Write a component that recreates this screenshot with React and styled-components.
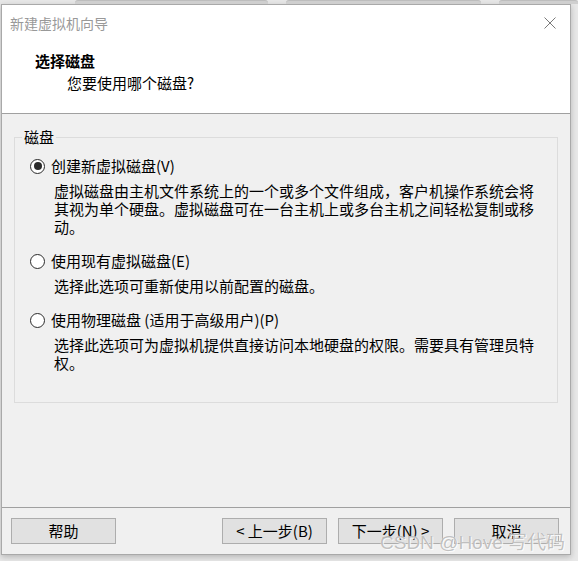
import React from 'react';
import styled, {createGlobalStyle} from 'styled-components';

const Global = createGlobalStyle`
    html, body {
        margin: 0;
        padding: 0;
        background: #e8e8e8;
    }
    body {
        font-family: "Noto Sans CJK SC", "Liberation Sans", sans-serif;
        color: #000;
    }
`;

const Desktop = styled.div`
    position: relative;
    box-sizing: border-box;
    width: 578px;
    height: 561px;
    overflow: hidden;
    padding-left: 1px;
`;

const TabStrip = styled.div`
    display: flex;
    height: 4px;
    padding-left: 74px;
    gap: 18px;
`;

const Tab = styled.div`
    width: ${p => p.w}px;
    height: 4px;
    background: #cfcfcf;
    border-top: 1px solid #bdbdbd;
    box-sizing: border-box;
    border-radius: 3px 3px 0 0;
`;

const Window = styled.div`
    box-sizing: border-box;
    width: 570px;
    height: 551px;
    border: 1px solid #a9a9a9;
    background: #f0f0f0;
    box-shadow: 0 2px 6px rgba(0, 0, 0, 0.22);
    display: flex;
    flex-direction: column;
`;

const TitleBar = styled.div`
    flex: none;
    height: 36px;
    display: flex;
    align-items: center;
    justify-content: space-between;
    padding: 0 14px 0 8px;
    background: #fff;
    font-size: 14px;
    color: #999;
`;

const Header = styled.div`
    flex: none;
    height: 73px;
    box-sizing: border-box;
    background: #fff;
    border-bottom: 1px solid #a0a0a0;
    padding: 10px 0 0 33px;
`;

const Heading = styled.div`
    font-size: 15px;
    line-height: 20px;
    font-weight: bold;
`;

const SubHeading = styled.div`
    font-size: 15px;
    line-height: 20px;
    margin: 2px 0 0 32px;
`;

const Body = styled.div`
    flex: 1;
    box-sizing: border-box;
    border-bottom: 1px solid #a0a0a0;
    padding: 23px 0 0 12px;
`;

const Group = styled.div`
    position: relative;
    box-sizing: border-box;
    width: 544px;
    height: 266px;
    border: 1px solid #dcdcdc;
    padding: 19px 0 0 15px;
    display: flex;
    flex-direction: column;
    gap: 16px;
`;

const Legend = styled.div`
    position: absolute;
    top: -10px;
    left: 7px;
    padding: 0 2px;
    background: #f0f0f0;
    font-size: 15px;
    line-height: 18px;
`;

const Option = styled.div`
    display: flex;
    flex-direction: column;
    gap: 7px;
`;

const OptionRow = styled.label`
    display: flex;
    align-items: center;
    gap: 6px;
    font-size: 15px;
    line-height: 18px;
`;

const Radio = styled.span`
    position: relative;
    box-sizing: border-box;
    width: 15px;
    height: 15px;
    border-radius: 50%;
    border: 1px solid #2b2b2b;
    background: #fff;

    &::after {
        content: '';
        display: ${p => (p.checked ? 'block' : 'none')};
        position: absolute;
        top: 2.5px;
        left: 2.5px;
        width: 8px;
        height: 8px;
        border-radius: 50%;
        background: #2b2b2b;
    }
`;

const Description = styled.div`
    width: 485px;
    margin-left: 24px;
    font-size: 15px;
    line-height: 18px;
`;

const Footer = styled.div`
    flex: none;
    box-sizing: border-box;
    height: 46px;
    display: flex;
    align-items: flex-start;
    gap: 11px;
    padding: 10px 0 0 9px;
`;

const Spacer = styled.div`
    flex: 1;
`;

const Button = styled.button`
    box-sizing: border-box;
    width: 105px;
    height: 26px;
    margin: 0;
    padding: 0;
    background: #e1e1e1;
    border: 1px solid #adadad;
    font-family: inherit;
    font-size: 15px;
    line-height: 22px;
    color: #000;
`;

const RightButtons = styled.div`
    display: flex;
    gap: 11px;
    padding-right: 11px;
`;

const Watermark = styled.div`
    position: absolute;
    left: 380px;
    top: 527px;
    font-family: "Liberation Sans", "Noto Sans CJK SC", sans-serif;
    font-size: 19px;
    color: rgba(140, 140, 140, 0.55);
    text-shadow: 0 0 1px #fff, 1px 1px 0 rgba(255, 255, 255, 0.8);
    white-space: nowrap;
    pointer-events: none;
`;

const CloseIcon = () => (
    <svg width="12" height="12" viewBox="0 0 12 12">
        <path d="M0.5 0.5 L11.5 11.5 M11.5 0.5 L0.5 11.5" stroke="#7a7a7a" strokeWidth="1" fill="none" />
    </svg>
);

const options = [
    {
        label: '创建新虚拟磁盘(V)',
        checked: true,
        text: '虚拟磁盘由主机文件系统上的一个或多个文件组成，客户机操作系统会将其视为单个硬盘。虚拟磁盘可在一台主机上或多台主机之间轻松复制或移动。'
    },
    {
        label: '使用现有虚拟磁盘(E)',
        text: '选择此选项可重新使用以前配置的磁盘。'
    },
    {
        label: '使用物理磁盘 (适用于高级用户)(P)',
        text: '选择此选项可为虚拟机提供直接访问本地硬盘的权限。需要具有管理员特权。'
    }
];

export default function App() {
    return (
        <Desktop>
            <Global />
            <TabStrip>
                <Tab w={195} />
                <Tab w={196} />
                <Tab w={80} />
            </TabStrip>
            <Window>
                <TitleBar>
                    <span>新建虚拟机向导</span>
                    <CloseIcon />
                </TitleBar>
                <Header>
                    <Heading>选择磁盘</Heading>
                    <SubHeading>您要使用哪个磁盘?</SubHeading>
                </Header>
                <Body>
                    <Group>
                        <Legend>磁盘</Legend>
                        {options.map(o => (
                            <Option key={o.label}>
                                <OptionRow>
                                    <Radio checked={o.checked} />
                                    {o.label}
                                </OptionRow>
                                <Description>{o.text}</Description>
                            </Option>
                        ))}
                    </Group>
                </Body>
                <Footer>
                    <Button>帮助</Button>
                    <Spacer />
                    <RightButtons>
                        <Button>&lt; 上一步(B)</Button>
                        <Button>下一步(N) &gt;</Button>
                        <Button>取消</Button>
                    </RightButtons>
                </Footer>
            </Window>
            <Watermark>CSDN @Hove 写代码</Watermark>
        </Desktop>
    );
}
